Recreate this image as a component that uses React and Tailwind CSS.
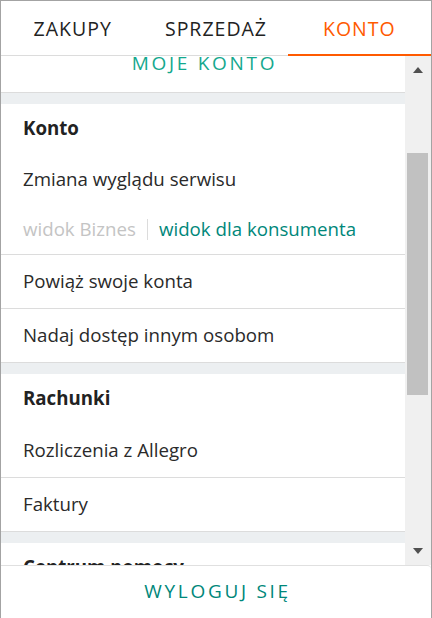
import React from 'react';

const font = "font-['Open_Sans',sans-serif]";

function Tab({ label, active }) {
  return (
    <div
      className={
        'flex-1 flex items-center justify-center text-[19.5px] tracking-[1px] ' +
        (active
          ? 'text-[#ff5a00] border-b-2 border-[#ff5a00] -mb-px'
          : 'text-[#222]')
      }
    >
      <span className="pt-[2px]">{label}</span>
    </div>
  );
}

function Band() {
  return <div className="h-[12px] shrink-0 border-t border-[#dcdcdc] bg-[#eceff1]" />;
}

function Heading({ children }) {
  return (
    <div className="h-[50px] shrink-0 flex items-center px-[22px] pb-[2px] text-[18.7px] font-bold text-[#222]">
      {children}
    </div>
  );
}

function Row({ children, last }) {
  return (
    <div
      className={
        'shrink-0 flex items-center px-[22px] text-[18.7px] text-[#2a2a2a] ' +
        (last ? 'h-[53px]' : 'h-[54px] border-b border-[#dcdcdc]')
      }
    >
      {children}
    </div>
  );
}

function Scrollbar() {
  return (
    <div className="w-[26px] shrink-0 bg-[#f0f0f0] flex flex-col items-center">
      <div className="h-[26px] flex items-center justify-center pt-[2px]">
        <svg width="10" height="6" viewBox="0 0 10 6">
          <path d="M5 0 L10 6 L0 6 Z" fill="#505050" />
        </svg>
      </div>
      <div className="h-[71px]" />
      <div className="w-[21px] h-[242px] bg-[#c1c1c1] -ml-px" />
      <div className="flex-1" />
      <div className="h-[26px] flex items-center justify-center pb-[2px]">
        <svg width="10" height="6" viewBox="0 0 10 6">
          <path d="M0 0 L10 0 L5 6 Z" fill="#505050" />
        </svg>
      </div>
    </div>
  );
}

export default function App() {
  return (
    <div
      className={
        'w-[432px] h-[618px] bg-white border border-b-0 border-[#a3a3a3] flex flex-col overflow-hidden ' +
        font
      }
    >
      <div className="h-[55px] shrink-0 flex border-b border-[#dcdcdc]">
        <Tab label="ZAKUPY" />
        <Tab label="SPRZEDAŻ" />
        <Tab label="KONTO" active />
      </div>

      <div className="flex-1 flex min-h-0">
        <div className="flex-1 overflow-hidden flex flex-col">
          <div className="h-[36px] shrink-0 flex items-start justify-center">
            <span className="text-[19px] leading-[19px] -mt-[2px] tracking-[2.7px] text-[#14a88e] pl-[3px]">
              MOJE KONTO
            </span>
          </div>
          <Band />

          <Heading>Konto</Heading>
          <div className="h-[50px] shrink-0 flex items-center px-[22px] text-[18.7px] text-[#2a2a2a]">
            Zmiana wyglądu serwisu
          </div>
          <div className="h-[51px] shrink-0 flex items-center px-[22px] text-[18.7px] border-b border-[#dcdcdc]">
            <span className="text-[#c4c4c4]">widok Biznes</span>
            <span className="mx-[11px] w-px h-[21px] bg-[#dcdcdc]" />
            <span className="text-[#00877a]">widok dla konsumenta</span>
          </div>
          <Row>Powiąż swoje konta</Row>
          <Row last>Nadaj dostęp innym osobom</Row>
          <Band />

          <Heading>Rachunki</Heading>
          <Row>Rozliczenia z Allegro</Row>
          <Row last>Faktury</Row>
          <Band />

          <Heading>Centrum pomocy</Heading>
        </div>
        <Scrollbar />
      </div>

      <div className="h-[53px] shrink-0 border-t border-[#e0e0e0] rounded-tr-[4px] flex items-center justify-center text-[19px] tracking-[2.7px] text-[#00877a]">
        <span className="pb-px pl-[3px]">WYLOGUJ SIĘ</span>
      </div>
    </div>
  );
}
